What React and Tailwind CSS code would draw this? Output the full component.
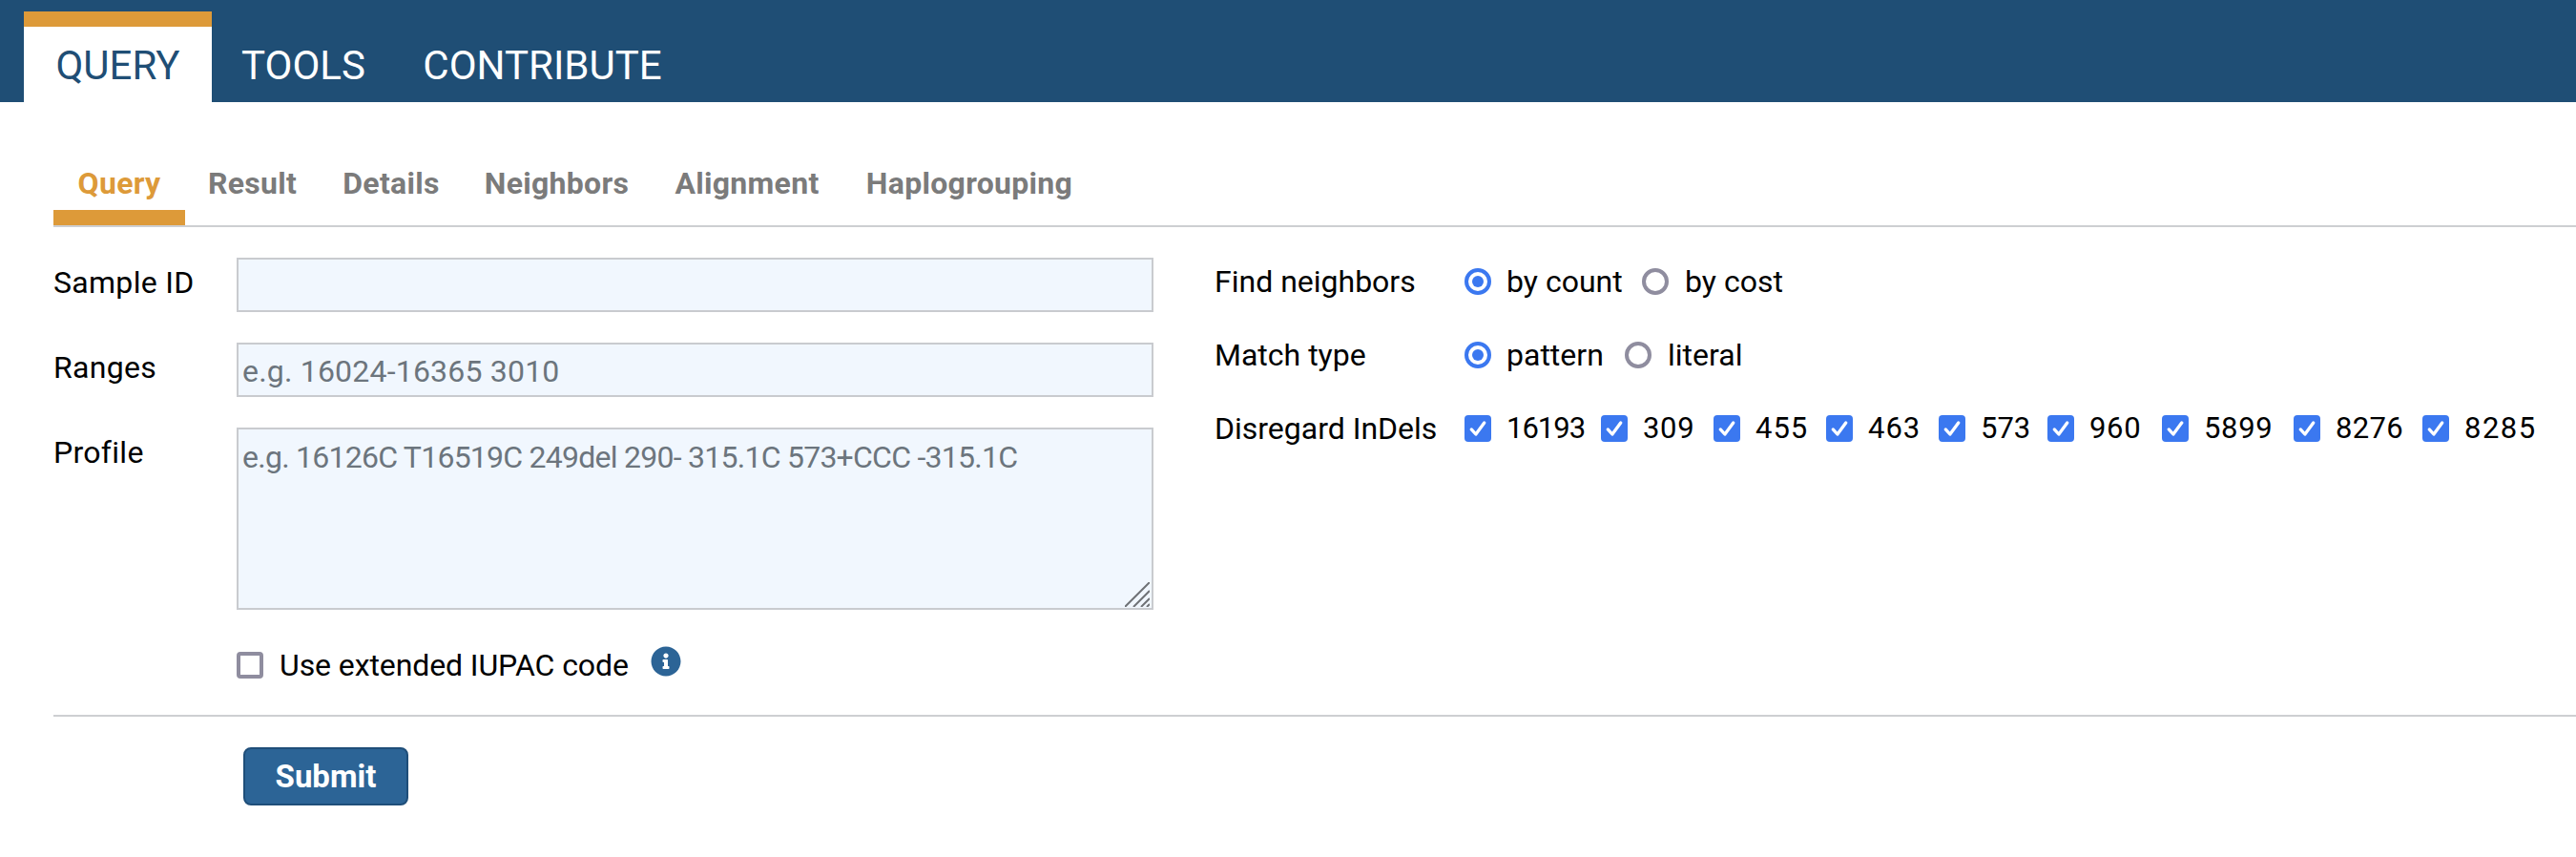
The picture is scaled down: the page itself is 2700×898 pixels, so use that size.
import React from 'react';
import { FaInfoCircle } from 'react-icons/fa';

function Radio({ checked }) {
    return (
        <span className={`flex h-[28px] w-[28px] shrink-0 items-center justify-center rounded-full border-[4px] ${checked ? 'border-[#3b78f0]' : 'border-[#8f8d9f]'} bg-white`}>
            {checked && <span className="h-[12px] w-[12px] rounded-full bg-[#3b78f0]" />}
        </span>
    );
}

function Check() {
    return (
        <span className="flex h-[28px] w-[28px] shrink-0 items-center justify-center rounded-[4px] bg-[#3b78f0]">
            <svg viewBox="0 0 16 16" className="h-[24px] w-[24px]" fill="none" stroke="#fff" strokeWidth="2.2" strokeLinecap="round" strokeLinejoin="round">
                <path d="M3.5 8.6 L6.6 12 L12.5 4" />
            </svg>
        </span>
    );
}

// main nav tab
function NavTab({ active, className, children }) {
    if (active) {
        return (
            <div className={`flex h-[95px] flex-col border-t-[16px] border-[#dd9a39] bg-white text-[#1f4e75] ${className}`}>
                <span className="pt-[16px] text-center">{children}</span>
            </div>
        );
    }
    return (
        <div className={`flex h-[95px] flex-col border-t-[16px] border-transparent text-white ${className}`}>
            <span className="pt-[16px] text-center">{children}</span>
        </div>
    );
}

function SubTab({ active, className, children }) {
    return (
        <div className={`flex h-[62px] items-start justify-center border-b-[16px] text-[32px] leading-[36px] font-bold tracking-[0.3px] ${active ? 'border-[#dd9a39] text-[#dd9a39]' : 'border-transparent text-[#7b7b7b]'} ${className}`}>
            {children}
        </div>
    );
}

function FieldRow({ label, children }) {
    return (
        <div className="flex">
            <div className="w-[192px] shrink-0 pt-[5px] text-[32px] leading-[42px] tracking-[0.3px] text-black">{label}</div>
            {children}
        </div>
    );
}

const inputClass = "w-[961px] border-2 border-[#c9cbcf] bg-[#f1f7fe] px-[4px] text-[32px] text-black outline-none placeholder:text-[#6c757d]";

const indels = [
    ['16193', 'w-[143px]', 'tracking-[-1px]'],
    ['309', 'w-[118px]', 'tracking-[0.7px]'],
    ['455', 'w-[118px]', 'tracking-[1px]'],
    ['463', 'w-[118px]', 'tracking-[1px]'],
    ['573', 'w-[114px]', 'tracking-[0px]'],
    ['960', 'w-[120px]', 'tracking-[0.7px]'],
    ['5899', 'w-[138px]', 'tracking-[0.7px]'],
    ['8276', 'w-[135px]', 'tracking-[0.3px]'],
    ['8285', 'w-[125px]', 'tracking-[1.5px]'],
];

export default function App() {
    return (
        <div className="min-h-[898px] bg-white font-['Roboto',sans-serif]">
            <header className="flex h-[107px] items-end bg-[#1f4e75] pl-[25px] text-[42px] leading-[50px]">
                <NavTab active className="w-[197px]">QUERY</NavTab>
                <NavTab className="w-[192px]">TOOLS</NavTab>
                <NavTab className="w-[309px]">CONTRIBUTE</NavTab>
            </header>

            <div className="pt-[67px] pl-[56px]">
                <nav className="flex border-b-2 border-[#cdcfd2]">
                    <SubTab active className="w-[138px]">Query</SubTab>
                    <SubTab className="w-[141px]">Result</SubTab>
                    <SubTab className="w-[150px]">Details</SubTab>
                    <SubTab className="w-[197px]">Neighbors</SubTab>
                    <SubTab className="w-[202px]">Alignment</SubTab>
                    <SubTab className="w-[264px]">Haplogrouping</SubTab>
                </nav>

                <div className="flex h-[513px] border-b-2 border-[#cdcfd2] pt-[32px]">
                    <div className="flex w-[1217px] shrink-0 flex-col gap-[32px]">
                        <FieldRow label="Sample ID">
                            <input className={`${inputClass} h-[57px]`} />
                        </FieldRow>
                        <FieldRow label="Ranges">
                            <input className={`${inputClass} h-[57px] pt-[2px] tracking-[0.2px]`} placeholder="e.g. 16024-16365 3010" />
                        </FieldRow>
                        <FieldRow label="Profile">
                            <div className="relative h-[191px] w-[961px]">
                                <textarea className={`${inputClass} block h-full resize-none pt-[8px] leading-[42px] tracking-[-0.75px]`} placeholder="e.g. 16126C T16519C 249del 290- 315.1C 573+CCC -315.1C" />
                                <svg viewBox="0 0 26 26" className="absolute right-[4px] bottom-[3px] h-[26px] w-[26px]" stroke="#6f7276" strokeWidth="2">
                                    <path d="M0 26 L26 0 M9 26 L26 9 M17 26 L26 17 M23 26 L26 23" />
                                </svg>
                            </div>
                        </FieldRow>
                        <div className="mt-[5px] flex items-center pl-[192px]">
                            <span className="h-[28px] w-[28px] rounded-[4px] border-[4px] border-[#8f8d9f] bg-white" />
                            <span className="ml-[17px] w-[364px] text-[32px] leading-[42px] tracking-[-0.1px] whitespace-nowrap text-black">Use extended IUPAC code</span>
                            <FaInfoCircle className="ml-[25px] -mt-[8px] text-[32px] text-[#2c6496]" />
                        </div>
                    </div>

                    <div className="flex flex-col gap-[49px] pt-[11px] text-[32px] leading-[28px] text-black">
                        <div className="flex items-center">
                            <div className="w-[262px]">Find neighbors</div>
                            <Radio checked />
                            <span className="ml-[16px] w-[142px]">by count</span>
                            <Radio />
                            <span className="ml-[17px]">by cost</span>
                        </div>
                        <div className="flex items-center">
                            <div className="w-[262px]">Match type</div>
                            <Radio checked />
                            <span className="ml-[16px] w-[124px]">pattern</span>
                            <Radio />
                            <span className="ml-[17px]">literal</span>
                        </div>
                        <div className="flex items-center">
                            <div className="w-[262px]">Disregard InDels</div>
                            {indels.map(([n, w, t]) => (
                                <div key={n} className={`flex items-center ${w}`}>
                                    <Check />
                                    <span className={`ml-[16px] text-[31px] ${t}`}>{n}</span>
                                </div>
                            ))}
                        </div>
                    </div>
                </div>

                <div className="pt-[32px] pl-[199px]">
                    <button className="h-[61px] w-[173px] rounded-[8px] border-2 border-[#1f4e79] bg-[#2c6496] text-[33px] font-bold text-white">
                        Submit
                    </button>
                </div>
            </div>
        </div>
    );
}
